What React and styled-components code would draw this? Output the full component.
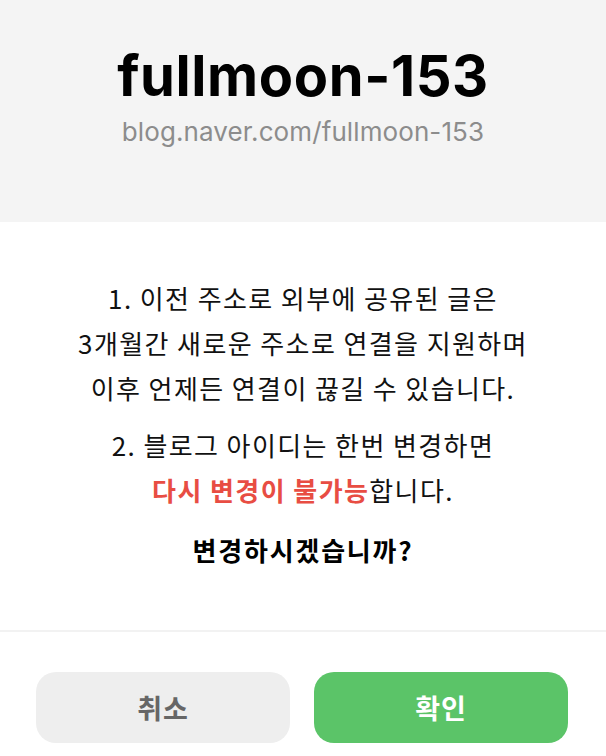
import React from "react";
import styled, { createGlobalStyle } from "styled-components";

const Global = createGlobalStyle`
  html, body { margin: 0; padding: 0; background: #fff; }
  body { font-family: Inter, "Noto Sans CJK KR", sans-serif; -webkit-font-smoothing: antialiased; }
`;

const Page = styled.div`
  width: 606px;
  height: 756px;
  display: flex;
  flex-direction: column;
  background: #fff;
  overflow: hidden;
`;

const Header = styled.header`
  height: 222px;
  flex-shrink: 0;
  background: #f4f4f4;
  display: flex;
  flex-direction: column;
  align-items: center;
  padding-top: 45px;
  box-sizing: border-box;
`;

const Title = styled.h1`
  margin: 0;
  font-family: Inter, sans-serif;
  font-weight: 700;
  font-size: 56px;
  line-height: 62px;
  letter-spacing: 0.6px;
  color: #000;
`;

const Url = styled.div`
  margin-top: 10px;
  font-family: Inter, sans-serif;
  font-size: 26px;
  line-height: 30px;
  color: #8c8c8c;
  letter-spacing: 0.1px;
`;

const Body = styled.section`
  height: 410px;
  flex-shrink: 0;
  display: flex;
  flex-direction: column;
  align-items: center;
  padding-top: 53px;
  box-sizing: border-box;
  border-bottom: 2px solid #f2f2f2;
`;

const Para = styled.p`
  margin: 0 0 12px;
  text-align: center;
  font-family: "Noto Sans CJK KR", sans-serif;
  font-size: 26px;
  line-height: 45px;
  color: #111;
  letter-spacing: 1.4px;
  white-space: nowrap;
`;

const Warn = styled.span`
  color: #e84d43;
  font-weight: 700;
`;

const Question = styled.p`
  margin: 4px 0 0;
  text-align: center;
  font-family: "Noto Sans CJK KR", sans-serif;
  font-size: 26px;
  font-weight: 700;
  line-height: 44px;
  color: #000;
  letter-spacing: 1.8px;
`;

const Actions = styled.div`
  display: grid;
  grid-template-columns: 1fr 1fr;
  gap: 24px;
  padding: 40px 38px 0 36px;
`;

const Button = styled.button`
  height: 71px;
  border: none;
  border-radius: 20px;
  font-family: "Noto Sans CJK KR", sans-serif;
  font-size: 27px;
  font-weight: 700;
  letter-spacing: 1px;
  background: ${(p) => (p.$primary ? "#5bc468" : "#eeeeee")};
  color: ${(p) => (p.$primary ? "#fff" : "#666")};
  cursor: pointer;
`;

export default function App() {
  return (
    <Page>
      <Global />
      <Header>
        <Title>fullmoon-153</Title>
        <Url>blog.naver.com/fullmoon-153</Url>
      </Header>
      <Body>
        <Para>
          1. 이전 주소로 외부에 공유된 글은
          <br />
          3개월간 새로운 주소로 연결을 지원하며
          <br />
          이후 언제든 연결이 끊길 수 있습니다.
        </Para>
        <Para>
          2. 블로그 아이디는 한번 변경하면
          <br />
          <Warn>다시 변경이 불가능</Warn>합니다.
        </Para>
        <Question>변경하시겠습니까?</Question>
      </Body>
      <Actions>
        <Button>취소</Button>
        <Button $primary>확인</Button>
      </Actions>
    </Page>
  );
}
